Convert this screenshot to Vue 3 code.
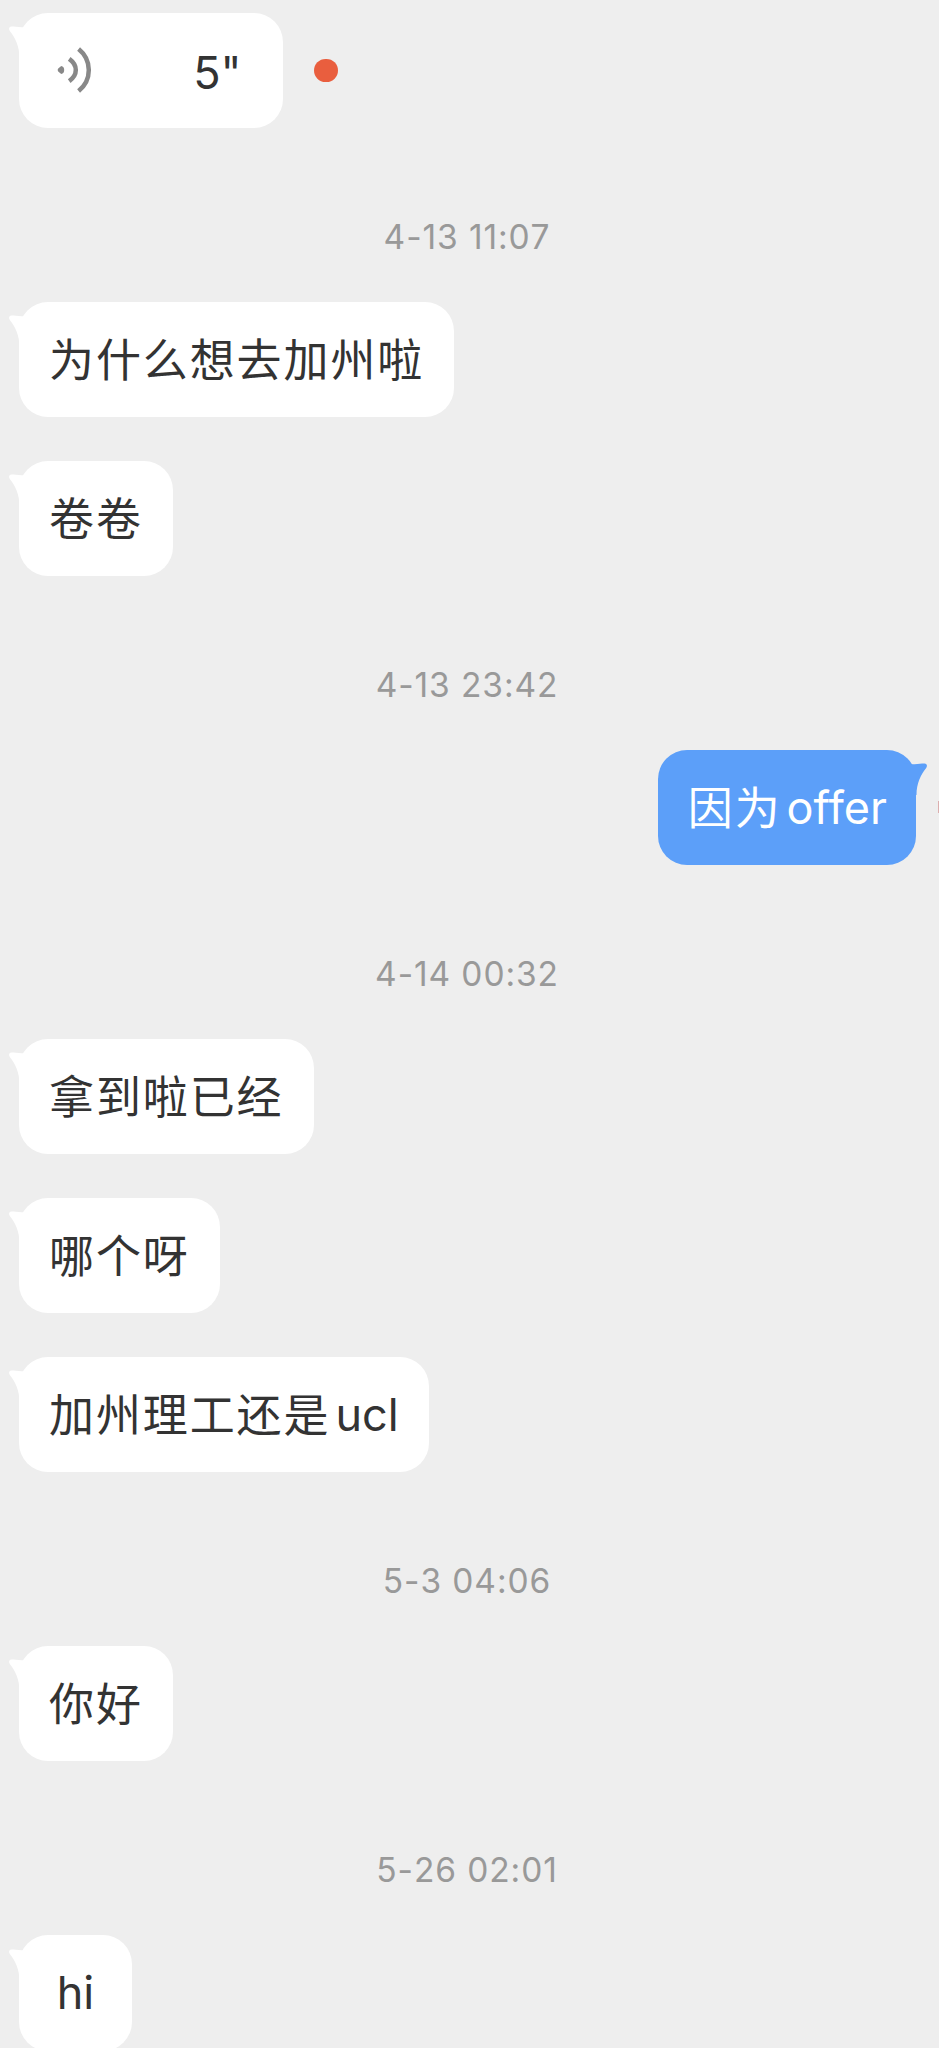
<script setup>
const items = [
  { type: 'voice', text: '5"' },
  { type: 'time', text: '4-13 11:07' },
  { type: 'in', text: '为什么想去加州啦' },
  { type: 'in', text: '卷卷' },
  { type: 'time', text: '4-13 23:42' },
  { type: 'out', text: '因为', latin: 'offer' },
  { type: 'time', text: '4-14 00:32' },
  { type: 'in', text: '拿到啦已经' },
  { type: 'in', text: '哪个呀' },
  { type: 'in', text: '加州理工还是', latin: 'ucl' },
  { type: 'time', text: '5-3 04:06' },
  { type: 'in', text: '你好' },
  { type: 'time', text: '5-26 02:01' },
  { type: 'in', text: '', latin: 'hi' },
]
</script>

<template>
  <main class="chat">
    <template v-for="(m, i) in items" :key="i">
      <time v-if="m.type === 'time'" class="stamp">{{ m.text }}</time>
      <div v-else class="row" :class="{ outgoing: m.type === 'out' }">
        <div class="bubble" :class="{ voice: m.type === 'voice', short: !m.text }">
          <svg class="tail" width="24" height="46" viewBox="0 0 24 46">
            <path d="M24 0 L14 1.2 C9 1.4 6 .5 2.5 .5 C0 .5 -.6 3 .8 5 C6 11.5 10.5 20 10.5 32 L24 32 Z" />
          </svg>
          <template v-if="m.type === 'voice'">
            <svg class="wave" width="36" height="48" viewBox="0 0 36 48">
              <path class="dot" d="M1.2 22.6 L4.2 20 Q7.2 20.5 7.2 24 Q7.2 27.5 4.2 28 L1.2 25.4 Q0 24 1.2 22.6 Z" />
              <path d="M12.2 12.9 Q18.8 17.7 18.8 24 Q18.8 30.3 12.2 35.1" />
              <path d="M21.6 3 Q31.8 11.3 31.8 24 Q31.8 36.7 21.6 45" />
            </svg>
            <span class="latin duration">{{ m.text }}</span>
          </template>
          <template v-else>
            <span v-if="m.text" class="cjk">{{ m.text }}</span>
            <span v-if="m.latin" class="latin">{{ m.latin }}</span>
          </template>
        </div>
        <i v-if="m.type === 'voice'" class="unread"></i>
        <i v-if="m.type === 'out'" class="avatar"></i>
      </div>
    </template>
  </main>
</template>

<style>
body {
  background: #eee;
}
</style>

<style scoped>
.chat {
  box-sizing: border-box;
  height: 2048px;
  overflow: hidden;
  background: #eee;
  padding-top: 12.6px;
  display: flex;
  flex-direction: column;
}
.row {
  position: relative;
  flex: none;
  display: flex;
  align-items: center;
  height: 115.5px;
  margin-bottom: 43.45px;
  padding-left: 19px;
}
.outgoing {
  justify-content: flex-end;
  padding: 0 23px 0 0;
}
.bubble {
  position: relative;
  box-sizing: border-box;
  display: flex;
  align-items: center;
  height: 100%;
  padding: 0 30px;
  border-radius: 29px;
  background: #fff;
  color: #333;
  white-space: nowrap;
}
.outgoing .bubble {
  padding-right: 29px;
  background: #5c9ff9;
  color: #fff;
}
.bubble.short {
  width: 113px;
  padding: 0 30px;
  justify-content: center;
}
.tail {
  position: absolute;
  left: -10.5px;
  top: 13.5px;
  fill: #fff;
}
.outgoing .tail {
  left: auto;
  right: -10.5px;
  transform: scaleX(-1);
  fill: #5c9ff9;
}
.cjk {
  font: 45px/60px "Noto Sans CJK SC", sans-serif;
  letter-spacing: 1.9px;
  margin-bottom: 3px;
}
.latin {
  font: 45px/60px Inter, sans-serif;
}
.cjk + .latin {
  margin-left: 5px;
}
.outgoing .latin {
  font-feature-settings: "calt" 0, "liga" 0;
}
.bubble.voice {
  width: 263.5px;
  padding: 0 41px 0 38px;
  justify-content: space-between;
}
.bubble .duration {
  margin-top: 5px;
}
.wave {
  fill: none;
  stroke: #888;
  stroke-width: 4.5;
}
.wave .dot {
  fill: #888;
  stroke: none;
}
.unread {
  width: 23.5px;
  height: 23.5px;
  margin-left: 31.5px;
  border-radius: 50%;
  background: #e95e3e;
}
.avatar {
  position: absolute;
  left: 938px;
  top: 51px;
  width: 1px;
  height: 12px;
  background: #dcaeae;
}
.stamp {
  flex: none;
  height: 50px;
  margin: 40.1px 0;
  padding-right: 5px;
  text-align: center;
  font: 33.5px/50px Inter, sans-serif;
  font-kerning: none;
  letter-spacing: 0.9px;
  color: #999;
}
</style>
